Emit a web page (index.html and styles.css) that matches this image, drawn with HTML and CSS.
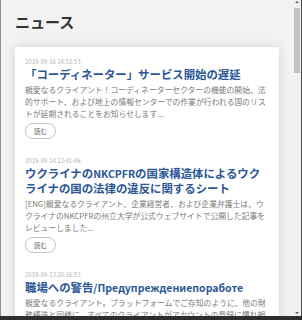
FILE: index.html
```html
<!DOCTYPE html>
<html lang="ja">

<head>
   <meta charset="UTF-8">
   <meta name="viewport" content="width=device-width, initial-scale=1.0">
   <title>ニュース</title>
   <link rel="stylesheet" href="styles.css">
</head>

<body>
   <div class="window">
      <div class="viewport">
         <main class="page">
            <h1 class="page-title">ニュース</h1>
            <div class="card">
               <div class="news-item">
                  <div class="news-date">2019-09-16 14:52:53</div>
                  <h2 class="news-title">「コーディネーター」サービス開始の遅延</h2>
                  <p class="news-text">親愛なるクライアント！コーディネーターセクターの機能の開始、法<br>的サポート、および地上の情報センターでの作業が行われる国のリス<br>トが延期されることをお知らせします...</p>
                  <div class="read-btn">読む</div>
               </div>
               <div class="news-item">
                  <div class="news-date">2019-09-14 12:41:46</div>
                  <h2 class="news-title">ウクライナの<span class="latin">NKCPFR</span>の国家構造体によるウク<br>ライナの国の法律の違反に関するシート</h2>
                  <p class="news-text">[ENG]親愛なるクライアント、企業経営者、および企業弁護士は、ウ<br>クライナのNKCPFRの州立大学が公式ウェブサイトで公開した記事を<br>レビューしました...</p>
                  <div class="read-btn">読む</div>
               </div>
               <div class="news-item">
                  <div class="news-date">2019-09-13 20:16:53</div>
                  <h2 class="news-title">職場への警告<span class="latin">/Предупреждениепоработе</span></h2>
                  <p class="news-text">親愛なるクライアント。プラットフォームでご存知のように、他の財<br>務構造と同様に、すべてのクライアントがアカウントの登録に慣れ親<br>しんでいます...</p>
                  <div class="read-btn">読む</div>
               </div>
            </div>
         </main>
         <div class="scrollbar">
            <span class="arrow-up"></span>
            <div class="track">
               <div class="thumb"></div>
            </div>
            <span class="arrow-down"></span>
         </div>
      </div>
      <div class="statusbar"></div>
   </div>
</body>

</html>
```

FILE: styles.css
```css
* {
   box-sizing: border-box;
}

html,
body {
   margin: 0;
   height: 100%;
   overflow: hidden;
}

body {
   font-family: "Noto Sans CJK JP", "Noto Sans", sans-serif;
   background-color: #f2f2f2;
   color: #333;
}

.window {
   display: flex;
   flex-direction: column;
   height: 320px;
}

.viewport {
   flex: 1;
   display: flex;
   min-height: 0;
}

.page {
   flex: 1;
   min-width: 0;
   overflow: hidden;
   border-left: 1px solid #8d939b;
   padding: 12px 14px 0 14px;
}

.page-title {
   margin: 0 0 15px 0;
   font-size: 15px;
   line-height: 20px;
   font-weight: 700;
   color: #333;
}

.card {
   background-color: #fff;
   box-shadow: 0 0 10px rgba(0, 0, 0, 0.13);
   padding: 11px 8px 0 10px;
}

.news-item {
   margin-bottom: 18px;
}

.news-date {
   font-size: 6px;
   line-height: 8px;
   color: #b3b3b3;
}

.news-title {
   margin: 1px 0 2px 0;
   font-size: 11.4px;
   line-height: 15px;
   font-weight: 700;
   color: #2b5797;
   white-space: nowrap;
}

.news-title .latin {
   font-size: 10.5px;
}

.news-text {
   margin: 0;
   font-size: 7.8px;
   line-height: 12px;
   color: #7a7a7a;
   white-space: nowrap;
}

.read-btn {
   display: flex;
   align-items: center;
   justify-content: center;
   margin-top: 3px;
   width: 31px;
   height: 16px;
   border: 1px solid #c4c4c4;
   border-radius: 8px;
   font-size: 6.5px;
   color: #666;
}

.scrollbar {
   width: 9px;
   display: flex;
   flex-direction: column;
   align-items: center;
   background-color: #f0f0f0;
   border-right: 1px solid #4a4a4a;
}

.arrow-up,
.arrow-down {
   width: 0;
   height: 0;
   border-left: 2px solid transparent;
   border-right: 2px solid transparent;
}

.arrow-up {
   margin-top: 1px;
   border-bottom: 2px solid #606060;
}

.arrow-down {
   margin: 0 0 2px 0;
   border-top: 2px solid #606060;
}

.track {
   flex: 1;
   width: 100%;
   padding: 5px 1px 0 1px;
}

.thumb {
   height: 65px;
   background-color: #c1c1c1;
}

.statusbar {
   height: 4px;
   background-color: #2e2e2e;
}
```
